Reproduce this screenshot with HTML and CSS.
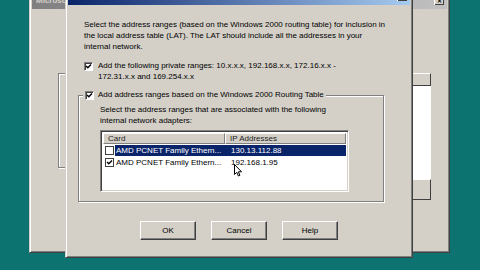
FILE: index.html
```html
<!DOCTYPE html>
<html lang="en">
<head>
  <meta charset="UTF-8" />
  <title>Local Address Table</title>
  <link rel="stylesheet" href="styles.css">
</head>
<body>
  <!-- Window behind -->
  <div class="window back">
    <div class="titlebar inactive">
      <span class="title-text">Microsoft ISA Server</span>
      <span class="close-btn">&#x2715;</span>
    </div>
    <div class="back-body">
      <div class="back-group"></div>
      <div class="back-scroll">
        <div class="sb-btn"></div>
        <div class="sb-track"></div>
        <div class="sb-btn tall"></div>
      </div>
    </div>
  </div>

  <!-- Local Address Table dialog -->
  <div class="window dialog">
    <div class="titlebar">
      <span class="title-text">Local Address Table</span>
      <span class="close-btn">&#x2715;</span>
    </div>
    <div class="dlg-body">
      <p class="intro">Select the address ranges (based on the Windows 2000 routing table) for inclusion in<br>the local address table (LAT). The LAT should include all the addresses in your<br>internal network.</p>

      <label class="check-row">
        <span class="cb checked"><svg viewBox="0 0 7 7"><polyline points="1,3 2.8,4.8 6,1.5" /></svg></span>
        <span>Add the following private ranges: 10.x.x.x, 192.168.x.x, 172.16.x.x -<br>172.31.x.x and 169.254.x.x</span>
      </label>

      <div class="group">
        <label class="check-row legend">
          <span class="cb checked"><svg viewBox="0 0 7 7"><polyline points="1,3 2.8,4.8 6,1.5" /></svg></span>
          <span>Add address ranges based on the Windows 2000 Routing Table</span>
        </label>
        <p class="group-text">Select the address ranges that are associated with the following<br>internal network adapters:</p>

        <div class="list">
          <div class="list-head">
            <span class="col-card">Card</span>
            <span class="col-ip">IP Addresses</span>
          </div>
          <div class="list-row selected">
            <span class="cb"></span>
            <span class="cell-card">AMD PCNET Family Ethern...</span>
            <span class="cell-ip">130.13.112.88</span>
          </div>
          <div class="list-row">
            <span class="cb checked"><svg viewBox="0 0 7 7"><polyline points="1,3 2.8,4.8 6,1.5" /></svg></span>
            <span class="cell-card">AMD PCNET Family Ethern...</span>
            <span class="cell-ip">192.168.1.95</span>
          </div>
          <svg class="cursor" viewBox="0 0 8 13"><path d="M0.5 0.5 L0.5 10.5 L2.8 8.3 L4.4 12 L5.9 11.4 L4.4 7.8 L7.5 7.8 Z" /></svg>
        </div>
      </div>

      <div class="buttons">
        <button class="btn">OK</button>
        <button class="btn">Cancel</button>
        <button class="btn">Help</button>
      </div>
    </div>
  </div>
</body>
</html>
```

FILE: styles.css
```css
* {
  box-sizing: border-box;
}

body {
  margin: 0;
  width: 480px;
  height: 270px;
  overflow: hidden;
  position: relative;
  background: #0c7371;
  font-family: 'Liberation Sans', Arial, sans-serif;
  font-size: 8px;
  color: #000;
}

/* Win2000 style windows */
.window {
  position: absolute;
  display: flex;
  flex-direction: column;
  background: #d4d0c8;
  border: 1px solid;
  border-color: #d4d0c8 #404040 #404040 #d4d0c8;
  box-shadow: inset 1px 1px 0 #fff, inset -1px -1px 0 #808080;
  padding: 2px;
}

.back {
  left: 29px;
  top: -12px;
  width: 421px;
  height: 265px;
}

.dialog {
  left: 65px;
  top: -16px;
  width: 348px;
  height: 274px;
}

.titlebar {
  height: 18px;
  flex-shrink: 0;
  display: flex;
  align-items: center;
  justify-content: space-between;
  padding: 0 3px 0 4px;
  background: linear-gradient(90deg, #0a246a, #a6caf0);
  color: #fff;
  font-weight: bold;
  font-size: 8px;
}

.titlebar.inactive {
  background: linear-gradient(90deg, #808080, #c0c0c0);
  color: #d4d0c8;
}

.inactive .title-text {
  max-width: 29px;
  overflow: hidden;
  white-space: nowrap;
}

.close-btn {
  width: 10px;
  height: 9px;
  display: flex;
  align-items: center;
  justify-content: center;
  background: #d4d0c8;
  color: #000;
  font-size: 6px;
  box-shadow: inset 1px 1px 0 #fff, inset -1px -1px 0 #404040;
}

/* Behind window fragments */
.back-body {
  flex: 1;
  display: flex;
  padding: 64px 16px 0 26px;
}

.back-group {
  flex: 1;
  height: 95px;
  border: 1px solid #808080;
  box-shadow: 1px 1px 0 #fff, inset 1px 1px 0 #fff;
}

.back-scroll {
  width: 19px;
  height: 127px;
  display: flex;
  flex-direction: column;
}

.sb-btn {
  height: 13px;
  background: #d4d0c8;
  border: 1px solid;
  border-color: #fff #404040 #404040 #fff;
}

.sb-btn.tall {
  height: 21px;
}

.sb-track {
  flex: 1;
  background: #fff;
}

/* Dialog contents */
.dlg-body {
  flex: 1;
  display: flex;
  flex-direction: column;
  padding: 14px 0 0 16px;
}

.intro {
  margin: 0;
  width: 320px;
  line-height: 11px;
  white-space: nowrap;
}

.check-row {
  display: flex;
  align-items: flex-start;
  gap: 5px;
  line-height: 11px;
  margin-top: 8px;
}

.check-row .cb {
  margin-top: 2px;
}

.cb {
  width: 9px;
  height: 9px;
  flex-shrink: 0;
  background: #fff;
  border: 1px solid;
  border-color: #808080 #fff #fff #808080;
  box-shadow: inset 1px 1px 0 #404040;
  display: flex;
}

.cb svg {
  width: 7px;
  height: 7px;
  fill: none;
  stroke: #000;
  stroke-width: 1.4;
}

.group {
  position: relative;
  margin: 13px 0 0 -6px;
  width: 306px;
  height: 107px;
  border: 1px solid #808080;
  box-shadow: 1px 1px 0 #fff, inset 1px 1px 0 #fff;
  padding: 8px 0 0 21px;
}

.check-row.legend {
  position: absolute;
  top: -7px;
  left: 4px;
  margin: 0;
  padding: 0 2px;
  gap: 4px;
  background: #d4d0c8;
}

.group-text {
  margin: 0;
  line-height: 11px;
}

.list {
  position: relative;
  margin-top: 4px;
  width: 249px;
  height: 62px;
  background: #fff;
  border: 1px solid;
  border-color: #808080 #fff #fff #808080;
  box-shadow: inset 1px 1px 0 #404040, inset -1px -1px 0 #d4d0c8;
  padding: 2px;
}

.list-head {
  display: flex;
  height: 11px;
  line-height: 10px;
  color: #222;
}

.list-head span {
  background: #d4d0c8;
  border: 1px solid;
  border-color: #fff #808080 #808080 #fff;
  padding-left: 4px;
}

.col-card {
  width: 122px;
}

.col-ip {
  flex: 1;
}

.list-row {
  display: flex;
  align-items: center;
  height: 11px;
  margin-top: 1px;
  padding-left: 2px;
}

.list-row:first-of-type {
  margin-top: 2px;
}

.list-row .cb {
  border-color: #404040;
  box-shadow: none;
}

.cell-card {
  width: 109px;
  padding-left: 1px;
  margin-left: 1px;
  line-height: 11px;
  white-space: nowrap;
}

.cell-ip {
  flex: 1;
  padding-left: 7px;
  line-height: 11px;
}

.list-row.selected .cell-card,
.list-row.selected .cell-ip {
  background: #0a246a;
  color: #fff;
}

.cursor {
  position: absolute;
  left: 133px;
  top: 33px;
  width: 8px;
  height: 13px;
  fill: #fff;
  stroke: #000;
  stroke-width: 1;
}

.buttons {
  display: flex;
  gap: 15px;
  margin: 19px 0 0 56px;
}

.btn {
  width: 56px;
  height: 19px;
  padding: 0;
  font-family: inherit;
  font-size: 8px;
  color: #000;
  background: #d4d0c8;
  border: 1px solid;
  border-color: #fff #404040 #404040 #fff;
  box-shadow: inset -1px -1px 0 #808080;
}
```
